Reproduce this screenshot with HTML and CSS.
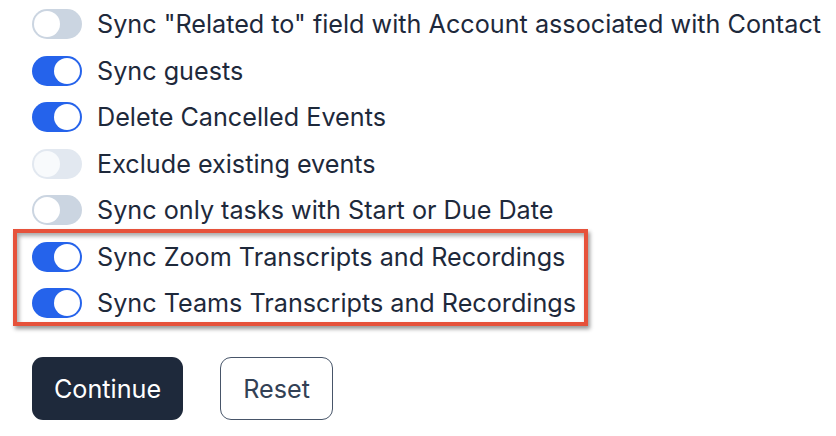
FILE: index.html
```html
<!DOCTYPE html>
<html lang="en">

<head>
   <meta charset="UTF-8">
   <meta name="viewport" content="width=device-width, initial-scale=1.0">
   <title>Sync settings</title>
   <link rel="stylesheet" href="styles.css">
</head>

<body>
   <div class="settings">
      <label class="option">
         <span class="switch"></span>
         <span>Sync "Related to" field with Account associated with Contact</span>
      </label>
      <label class="option">
         <span class="switch on"></span>
         <span>Sync guests</span>
      </label>
      <label class="option">
         <span class="switch on"></span>
         <span>Delete Cancelled Events</span>
      </label>
      <label class="option">
         <span class="switch disabled"></span>
         <span>Exclude existing events</span>
      </label>
      <label class="option">
         <span class="switch"></span>
         <span>Sync only tasks with Start or Due Date</span>
      </label>

      <div class="highlight">
         <label class="option">
            <span class="switch on"></span>
            <span>Sync Zoom Transcripts and Recordings</span>
         </label>
         <label class="option">
            <span class="switch on"></span>
            <span>Sync Teams Transcripts and Recordings</span>
         </label>
      </div>
   </div>

   <div class="actions">
      <button class="btn btn-primary">Continue</button>
      <button class="btn btn-outline">Reset</button>
   </div>
</body>

</html>
```

FILE: styles.css
```css
* {
   margin: 0;
   padding: 0;
   box-sizing: border-box;
   font-family: Inter, 'Liberation Sans', Arial, sans-serif;
}

body {
   background: #fff;
   color: #1e293b;
   padding: 9px 0 0 32px;
}

.settings {
   display: flex;
   flex-direction: column;
   gap: 16.5px;
}

.option {
   display: flex;
   align-items: center;
   gap: 15px;
   height: 30px;
   font-size: 25.2px;
   white-space: nowrap;
}

/* toggle switch */
.switch {
   position: relative;
   flex: none;
   width: 50px;
   height: 30px;
   border-radius: 15px;
   background: #cbd5e1;
}

.switch::after {
   content: "";
   position: absolute;
   top: 2px;
   left: 2px;
   width: 26px;
   height: 26px;
   border-radius: 50%;
   background: #fff;
}

.switch.on {
   background: #2563eb;
}

.switch.on::after {
   left: 22px;
}

.switch.disabled {
   background: #e2e8f0;
}

.switch.disabled::after {
   background: #f8fafc;
}

/* red frame round the new options */
.highlight {
   position: relative;
   display: flex;
   flex-direction: column;
   gap: 16.5px;
   width: fit-content;
}

.highlight::after {
   content: "";
   position: absolute;
   top: -12.5px;
   bottom: -8px;
   left: -19px;
   right: -12px;
   border: 4px solid #e6523b;
   box-shadow: 2px 3px 4px rgba(0, 0, 0, 0.4), inset 2px 3px 4px rgba(0, 0, 0, 0.35);
   pointer-events: none;
}

.actions {
   display: flex;
   gap: 37px;
   margin-top: 39px;
}

.btn {
   height: 63px;
   border-radius: 11px;
   font-size: 25.2px;
   cursor: pointer;
}

.btn-primary {
   width: 151px;
   background: #1e293b;
   color: #fff;
   border: none;
}

.btn-outline {
   width: 113px;
   background: #fff;
   color: #334155;
   border: 1px solid #475569;
}
```
